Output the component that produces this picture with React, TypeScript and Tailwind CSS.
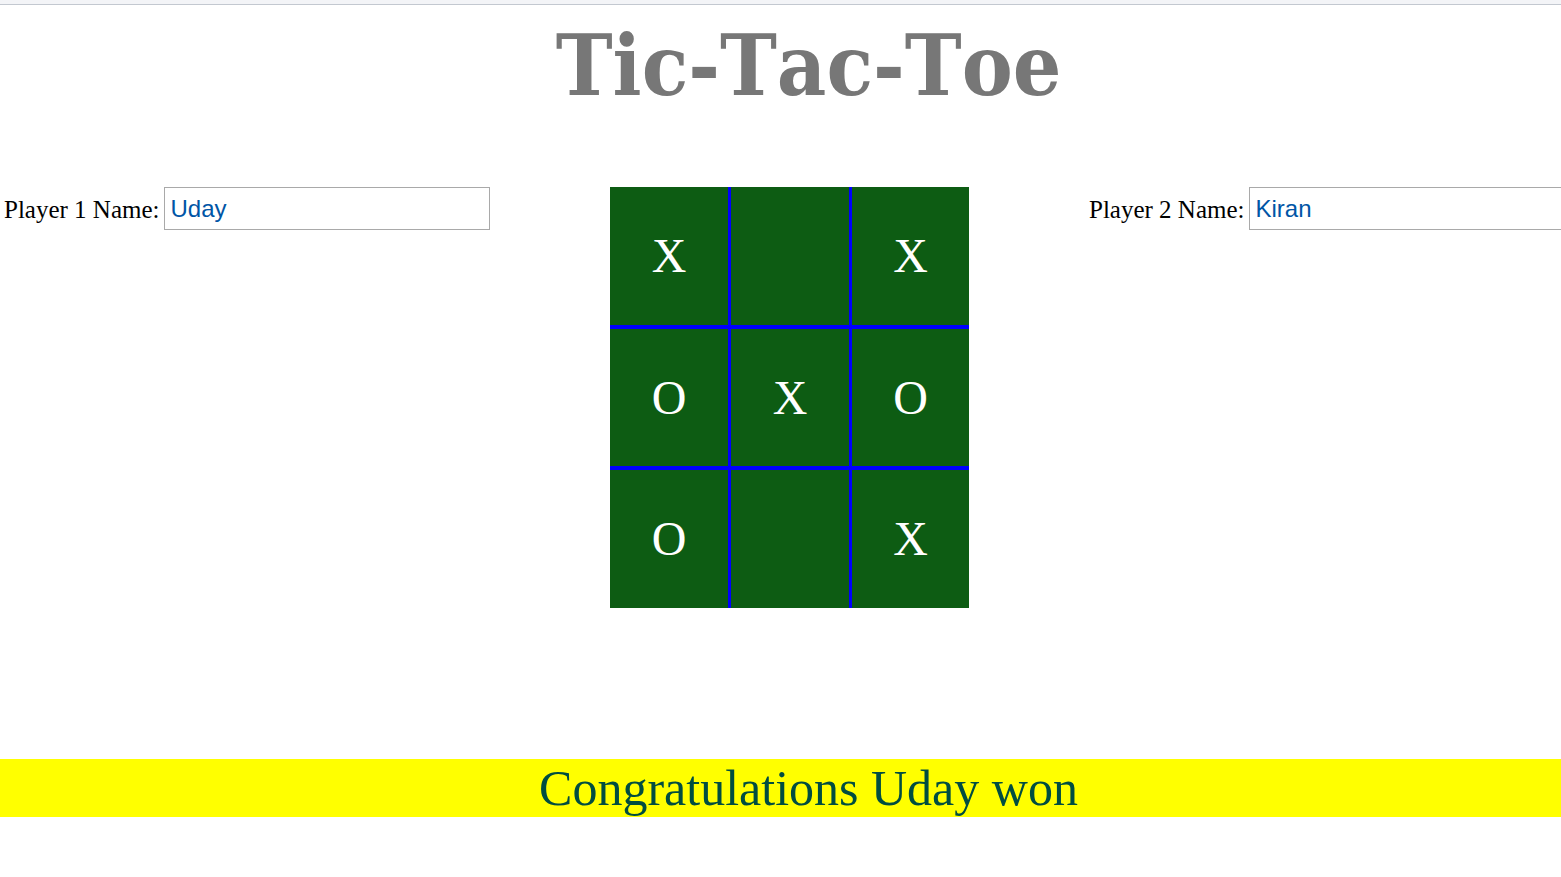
const cells = ["X", "", "X", "O", "X", "O", "O", "", "X"]

function PlayerField({label, value}: {label: string; value: string}) {
    return (
        <div className="flex items-start">
            <label className="text-[25px] text-black mt-[4px] mr-[4px] whitespace-nowrap">{label}</label>
            <input
                className="w-[326px] h-[43px] border border-[#a9a9a9] px-[6px] text-[24px] text-[#0055a6] outline-none"
                style={{fontFamily: '"Liberation Sans", Arial, sans-serif'}}
                defaultValue={value}
            />
        </div>
    )
}

export default function App() {
    return (
        <div className="w-[1561px] h-[877px] overflow-hidden bg-white" style={{fontFamily: '"Liberation Serif", "Times New Roman", serif'}}>
            <div className="h-[5px] bg-[#f3f4f7] border-b border-[#c3c8d0]"></div>
            <div className="w-[1617px]">
                <h1
                    className="text-center text-[85px] leading-none font-bold text-[#777777] mt-[18px] font-stretch-condensed [font-kerning:none]"
                    style={{fontFamily: '"DejaVu Serif Condensed", "DejaVu Serif", serif'}}
                >
                    Tic-Tac-Toe
                </h1>

                <div className="flex mt-[79px]">
                    <div className="w-[610px] pl-[4px]">
                        <PlayerField label="Player 1 Name:" value="Uday" />
                    </div>
                    <div className="grid grid-cols-[118px_118px_117px] grid-rows-[138px_137px_138px] gap-x-[3px] gap-y-[4px] bg-[#0000ff]">
                        {cells.map((c, i) => (
                            <div key={i} className="bg-[#0d5c13] flex items-center justify-center text-white text-[48px]">
                                {c}
                            </div>
                        ))}
                    </div>
                    <div className="pl-[120px]">
                        <PlayerField label="Player 2 Name:" value="Kiran" />
                    </div>
                </div>

                <div className="mt-[151px] h-[58px] bg-[#ffff00] flex items-center justify-center text-[50px] text-[#004d40]">
                    Congratulations Uday won
                </div>
            </div>
        </div>
    )
}
